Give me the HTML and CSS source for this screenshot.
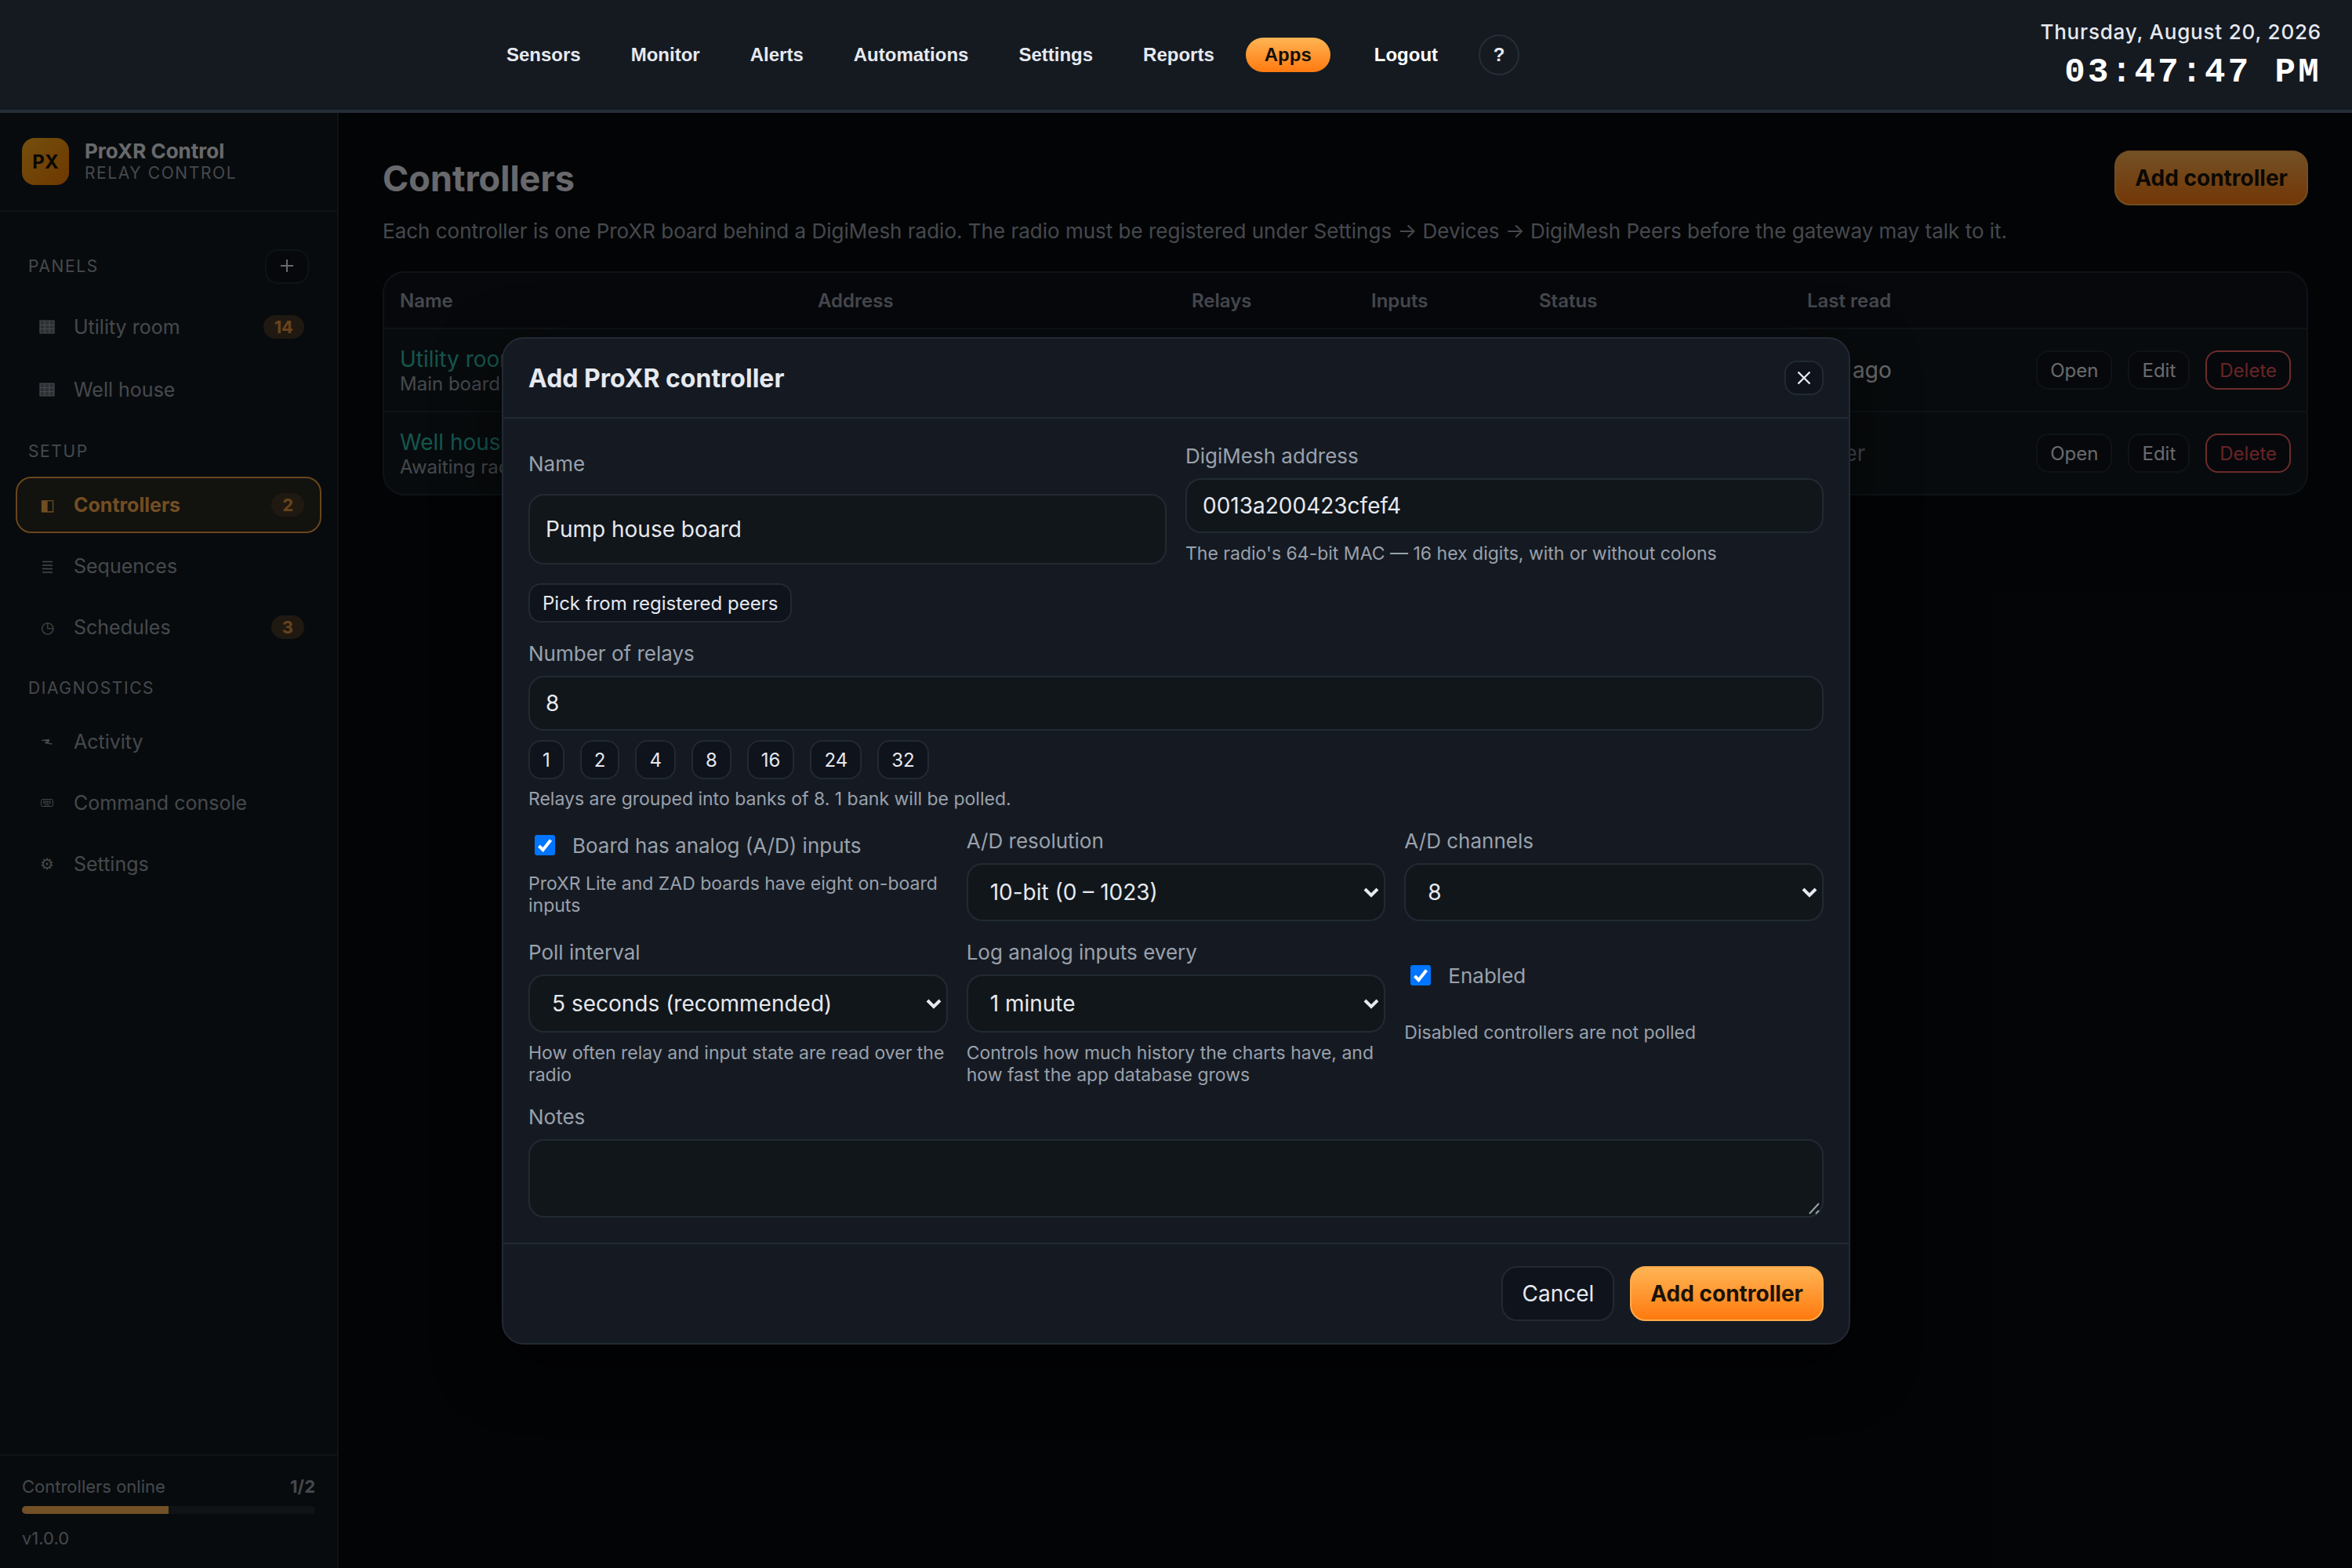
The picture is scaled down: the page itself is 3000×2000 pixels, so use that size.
FILE: index.html
```html
<!DOCTYPE html>
<html lang="en">
<head>
    <meta charset="UTF-8">
    <title>ProXR Control</title>
    <link rel="stylesheet" href="styles.css">
</head>
<body>
    <header class="topbar">
        <nav class="topnav">
            <a>Sensors</a>
            <a>Monitor</a>
            <a>Alerts</a>
            <a>Automations</a>
            <a>Settings</a>
            <a>Reports</a>
            <a class="current">Apps</a>
            <a class="logout">Logout</a>
            <span class="help">?</span>
        </nav>
        <div class="clock">
            <div class="clock-date">Thursday, August 20, 2026</div>
            <div class="clock-time">03:47:47 PM</div>
        </div>
    </header>

    <div class="app">
        <aside class="sidebar">
            <div class="brand">
                <div class="brand-mark">PX</div>
                <div>
                    <div class="brand-name">ProXR Control</div>
                    <div class="brand-sub">RELAY CONTROL</div>
                </div>
            </div>
            <div class="side-nav">
                <div class="side-title with-button">PANELS <button class="btn small add"><svg viewBox="0 0 16 16"><path d="M8 0v16M0 8h16"/></svg></button></div>
                <a class="side-item panel"><svg class="icon" viewBox="0 0 20 20"><path d="M1 2h18v16H1zM7 2v16M13 2v16M1 7.500h18M1 12.500h18" fill="currentColor" fill-opacity=".6" stroke="currentColor" stroke-width="1.200"/></svg>Utility room<span class="badge">14</span></a>
                <a class="side-item panel"><svg class="icon" viewBox="0 0 20 20"><path d="M1 2h18v16H1zM7 2v16M13 2v16M1 7.500h18M1 12.500h18" fill="currentColor" fill-opacity=".6" stroke="currentColor" stroke-width="1.200"/></svg>Well house</a>
                <div class="side-title">SETUP</div>
                <a class="side-item active"><span class="icon">◧</span>Controllers<span class="badge">2</span></a>
                <a class="side-item"><svg class="icon" viewBox="0 0 20 20"><path d="M4 4.500h13M4 9h13M4 13.500h13M4 18h13" fill="none" stroke="currentColor" stroke-width="1.700"/></svg>Sequences</a>
                <a class="side-item"><span class="icon">◷</span>Schedules<span class="badge">3</span></a>
                <div class="side-title">DIAGNOSTICS</div>
                <a class="side-item"><svg class="icon" viewBox="0 0 20 20"><path d="M3.500 8.500l8-1-4 4.500M16.500 13l-6.500-1 3-4" fill="none" stroke="currentColor" stroke-width="1.600"/></svg>Activity</a>
                <a class="side-item"><svg class="icon" viewBox="0 0 20 20"><rect x="2.500" y="5.500" width="15" height="9" rx="2" fill="none" stroke="currentColor"/><path d="M5 8h10M5 10h10M7 12.500h6" stroke="currentColor" stroke-width="1.300" stroke-dasharray="1.500 .8"/></svg>Command console</a>
                <a class="side-item"><span class="icon">⚙</span>Settings</a>
            </div>
            <div class="side-footer">
                <div class="online"><span>Controllers online</span><b>1/2</b></div>
                <div class="meter"><div class="meter-fill" style="width: 50%"></div></div>
                <div>v1.0.0</div>
            </div>
        </aside>

        <main class="main">
            <div class="page-head">
                <h1>Controllers</h1>
                <button class="btn primary">Add controller</button>
            </div>
            <p class="lead">Each controller is one ProXR board behind a DigiMesh radio. The radio must be registered under Settings → Devices → DigiMesh Peers before the gateway may talk to it.</p>
            <div class="table">
                <div class="tr th">
                    <span>Name</span><span>Address</span><span>Relays</span><span>Inputs</span><span>Status</span><span>Last read</span><span></span>
                </div>
                <div class="tr">
                    <div><a class="link">Utility room</a><div class="sub">Main board</div></div>
                    <span></span><span></span><span></span><span></span>
                    <span class="seen">34s ago</span>
                    <div class="actions">
                        <button class="btn small">Open</button>
                        <button class="btn small">Edit</button>
                        <button class="btn small danger">Delete</button>
                    </div>
                </div>
                <div class="tr">
                    <div><a class="link">Well house</a><div class="sub">Awaiting radio</div></div>
                    <span></span><span></span><span></span><span></span>
                    <span class="seen never">never</span>
                    <div class="actions">
                        <button class="btn small">Open</button>
                        <button class="btn small">Edit</button>
                        <button class="btn small danger">Delete</button>
                    </div>
                </div>
            </div>
        </main>

        <div class="overlay">
            <div class="modal">
                <div class="modal-head">
                    <h2>Add ProXR controller</h2>
                    <button class="btn small close"><svg viewBox="0 0 18 18"><path d="M1.500 1.500l15 15M16.500 1.500l-15 15"/></svg></button>
                </div>
                <div class="modal-body">
                    <div class="row two">
                        <div class="field stretch">
                            <label>Name</label>
                            <div class="input tall">Pump house board</div>
                        </div>
                        <div class="field">
                            <label>DigiMesh address</label>
                            <div class="input">0013a200423cfef4</div>
                            <div class="hint">The radio's 64-bit MAC — 16 hex digits, with or without colons</div>
                        </div>
                    </div>
                    <button class="btn small pick">Pick from registered peers</button>
                    <div class="field relays">
                        <label>Number of relays</label>
                        <div class="input">8</div>
                        <div class="chips">
                            <button class="btn small">1</button>
                            <button class="btn small">2</button>
                            <button class="btn small">4</button>
                            <button class="btn small">8</button>
                            <button class="btn small">16</button>
                            <button class="btn small">24</button>
                            <button class="btn small">32</button>
                        </div>
                        <div class="hint">Relays are grouped into banks of 8. 1 bank will be polled.</div>
                    </div>
                    <div class="row three">
                        <div class="field">
                            <div class="check">
                                <svg class="box" viewBox="0 0 26 26"><rect width="26" height="26" rx="3" fill="#0075ff"/><path d="M5.500 14l5 5L20.500 6.500" fill="none" stroke="#fff" stroke-width="4"/></svg>
                                <span>Board has analog (A/D) inputs</span>
                            </div>
                            <div class="hint">ProXR Lite and ZAD boards have eight on-board inputs</div>
                        </div>
                        <div class="field">
                            <label>A/D resolution</label>
                            <div class="input select">10-bit (0 – 1023)<svg class="arrow" viewBox="0 0 20 14"><path d="M2 3l8 8 8-8"/></svg></div>
                        </div>
                        <div class="field">
                            <label>A/D channels</label>
                            <div class="input select">8<svg class="arrow" viewBox="0 0 20 14"><path d="M2 3l8 8 8-8"/></svg></div>
                        </div>
                    </div>
                    <div class="row three">
                        <div class="field">
                            <label>Poll interval</label>
                            <div class="input select">5 seconds (recommended)<svg class="arrow" viewBox="0 0 20 14"><path d="M2 3l8 8 8-8"/></svg></div>
                            <div class="hint">How often relay and input state are read over the radio</div>
                        </div>
                        <div class="field">
                            <label>Log analog inputs every</label>
                            <div class="input select">1 minute<svg class="arrow" viewBox="0 0 20 14"><path d="M2 3l8 8 8-8"/></svg></div>
                            <div class="hint">Controls how much history the charts have, and how fast the app database grows</div>
                        </div>
                        <div class="field enabled">
                            <div class="check">
                                <svg class="box" viewBox="0 0 26 26"><rect width="26" height="26" rx="3" fill="#0075ff"/><path d="M5.500 14l5 5L20.500 6.500" fill="none" stroke="#fff" stroke-width="4"/></svg>
                                <span>Enabled</span>
                            </div>
                            <div class="hint">Disabled controllers are not polled</div>
                        </div>
                    </div>
                    <div class="field last">
                        <label>Notes</label>
                        <div class="input notes"><svg class="grip" viewBox="0 0 16 16"><path d="M2 15L14 2M10 15l4-4"/></svg></div>
                    </div>
                </div>
                <div class="modal-foot">
                    <button class="btn">Cancel</button>
                    <button class="btn primary">Add controller</button>
                </div>
            </div>
        </div>
    </div>
</body>
</html>
```

FILE: styles.css
```css
* {
    box-sizing: border-box;
}

body {
    margin: 0;
    height: 2000px;
    display: flex;
    flex-direction: column;
    overflow: hidden;
    background: #080b0e;
    color: #e6e9f0;
    font-family: Inter, "Liberation Sans", sans-serif;
    font-size: 28px;
}

h1, h2, p {
    margin: 0;
}

/* top bar */
.topbar {
    height: 144px;
    flex: none;
    display: flex;
    justify-content: space-between;
    align-items: flex-start;
    padding: 0 39px 0 622px;
    background: #151a21;
    border-bottom: 4px solid #252d37;
}

.topnav {
    display: flex;
    align-items: center;
    gap: 16px;
    height: 140px;
    font: bold 24px "Liberation Sans", Arial, sans-serif;
}

.topnav a {
    padding: 8px 24px;
    line-height: 28px;
}

.topnav .current {
    color: #14100a;
    border-radius: 22px;
    background: linear-gradient(#ffb454, #ff7a0f);
}

.topnav .logout {
    margin-left: 16px;
    color: #fff;
}

.help {
    width: 52px;
    height: 52px;
    margin-left: 12px;
    border: 2px solid #252d37;
    border-radius: 50%;
    line-height: 48px;
    text-align: center;
}

.clock {
    text-align: right;
    padding-top: 24px;
}

.clock-date {
    font-size: 26px;
    font-weight: 500;
    letter-spacing: 0.8px;
    line-height: 34px;
}

.clock-time {
    margin-top: 10px;
    color: #fff;
    font: bold 44px "Courier New", "Liberation Mono", monospace;
    line-height: 48px;
    letter-spacing: 3.4px;
}

.app {
    position: relative;
    flex: 1;
    display: flex;
    min-height: 0;
}

/* buttons */
.btn {
    height: 70px;
    padding: 0 24px;
    border: 2px solid #212a33;
    border-radius: 20px;
    background: #0f131b;
    color: #e6e9f0;
    font: 400 28px Inter, sans-serif;
    white-space: nowrap;
}

.btn.small {
    height: 50px;
    padding: 0 16px;
    border-radius: 16px;
    font-size: 24px;
}

.btn.primary {
    border-color: #ffab4a;
    background: linear-gradient(#ffb454, #ff7a0f);
    color: #1a1206;
    font-weight: 700;
}

.btn.danger {
    border-color: #ef5f5f;
    color: #e05252;
}

/* sidebar */
.sidebar {
    width: 432px;
    flex: none;
    display: flex;
    flex-direction: column;
    background: #12191e;
    border-right: 2px solid #212a33;
    color: #9aa1ac;
}

.brand {
    height: 126px;
    display: flex;
    align-items: center;
    gap: 20px;
    padding: 0 28px;
    border-bottom: 2px solid #212a33;
}

.brand-mark {
    width: 60px;
    height: 60px;
    border-radius: 16px;
    background: linear-gradient(135deg, #ffb020, #f57c00);
    color: #14100a;
    font-size: 24px;
    font-weight: 700;
    line-height: 62px;
    text-align: center;
}

.brand-name {
    color: #e6e9f0;
    font-weight: 700;
    font-size: 26px;
    line-height: 30px;
}

.brand-sub {
    font-size: 21px;
    line-height: 26px;
    letter-spacing: 1.6px;
}

.side-nav {
    flex: 1;
    display: flex;
    flex-direction: column;
    gap: 6px;
    padding: 39px 20px;
}

.side-title {
    height: 62px;
    padding: 10px 16px 0;
    font-size: 21px;
    line-height: 52px;
    letter-spacing: 1.6px;
}

.side-title.with-button {
    height: 65px;
    display: flex;
    align-items: center;
    justify-content: space-between;
    padding: 0 16px 3px;
}

.btn.add, .btn.close {
    width: 50px;
    height: 44px;
    display: flex;
    align-items: center;
    justify-content: center;
    padding: 0;
}

.btn.add {
    width: 56px;
}

.add svg, .close svg {
    width: 18px;
    height: 18px;
    fill: none;
    stroke: #e6e9f0;
    stroke-width: 2.4;
}

.add svg {
    width: 16px;
    height: 16px;
    margin-bottom: 3px;
    stroke-width: 2;
}

.side-item {
    height: 72px;
    display: flex;
    align-items: center;
    gap: 24px;
    padding: 0 20px 0 28px;
    border: 2px solid transparent;
    border-radius: 20px;
    font-size: 25px;
}

.side-item.panel {
    height: 74px;
}

.side-item.active {
    border-color: #e89a42;
    background: #39322499;
    color: #ffae4d;
    font-weight: 700;
}

.icon {
    width: 20px;
    height: 20px;
    font-size: 20px;
    font-weight: 400;
    line-height: 20px;
    text-align: center;
}

.badge {
    margin-left: auto;
    padding: 0 14px;
    border-radius: 15px;
    background: #453828;
    color: #e8963a;
    font-size: 22px;
    font-weight: 700;
    line-height: 30px;
}

.side-footer {
    height: 145px;
    padding: 24px 28px 0;
    border-top: 2px solid #212a33;
    font-size: 22px;
    line-height: 30px;
}

.online {
    display: flex;
    justify-content: space-between;
}

.meter {
    height: 10px;
    margin: 10px 0 16px;
    border-radius: 5px;
    overflow: hidden;
    background: #232a32;
}

.meter-fill {
    height: 100%;
    background: #ffb454;
}

/* controllers list */
.main {
    flex: 1;
    padding: 48px 56px;
}

.page-head {
    display: flex;
    align-items: center;
    justify-content: space-between;
}

h1 {
    font-size: 45px;
    font-weight: 700;
}

.lead {
    margin-top: 16px;
    color: #9aa1ac;
    font-size: 26px;
    line-height: 34px;
}

.table {
    margin-top: 34px;
    border: 2px solid #212a33;
    border-radius: 28px;
    background: #12191e;
    overflow: hidden;
}

.tr {
    height: 106px;
    display: grid;
    grid-template-columns: 533px 477px 229px 214px 342px 1fr auto;
    align-items: center;
    padding: 0 20px;
}

.tr + .tr {
    border-top: 2px solid #212a33;
}

.tr.th {
    height: 70px;
    background: #10131b;
    color: #9aa1ac;
    font-size: 24px;
    font-weight: 600;
}

.link {
    color: #2dbfae;
}

.sub {
    color: #9aa1ac;
    font-size: 24px;
}

.never {
    color: #9aa1ac;
}

.actions {
    display: flex;
    gap: 20px;
}

/* modal */
.overlay {
    position: absolute;
    inset: 0;
    display: flex;
    justify-content: center;
    align-items: flex-start;
    padding-top: 286px;
    background: rgba(0, 0, 0, 0.55);
}

.modal {
    width: 1720px;
    border: 2px solid #212a33;
    border-radius: 28px;
    background: #151a22;
    box-shadow: 0 24px 80px rgba(0, 0, 0, 0.6);
}

.modal-head {
    height: 102px;
    display: flex;
    align-items: center;
    justify-content: space-between;
    padding: 0 32px;
    border-bottom: 2px solid #212a33;
}

h2 {
    font-size: 32px;
    font-weight: 700;
}

.modal-body {
    padding: 30px 32px 32px;
}

.row {
    display: grid;
    column-gap: 24px;
}

.row.two {
    grid-template-columns: 1fr 1fr;
}

.row.three {
    grid-template-columns: 1fr 1fr 1fr;
    margin-top: 22px;
}

label {
    display: block;
    height: 46px;
    color: #9aa1ac;
    font-size: 26px;
    line-height: 36px;
}

.stretch label {
    height: 66px;
    line-height: 56px;
}

.input {
    height: 70px;
    display: flex;
    align-items: center;
    padding: 0 20px;
    border: 2px solid #212a33;
    border-radius: 20px;
    background: #11161a;
    font-size: 28px;
}

.input.tall {
    height: 90px;
}

.input.select {
    height: 74px;
    justify-content: space-between;
    padding: 0 6px 0 28px;
}

.arrow {
    width: 20px;
    height: 14px;
    fill: none;
    stroke: #e6e9f0;
    stroke-width: 4;
}

.hint {
    margin-top: 12px;
    color: #9aa1ac;
    font-size: 23px;
    line-height: 28px;
}

.pick {
    display: block;
    margin-top: 24px;
}

.relays, .last {
    margin-top: 22px;
}

.relays .hint {
    margin-top: 11px;
}

.chips {
    display: flex;
    gap: 20px;
    margin-top: 12px;
}

.check {
    height: 48px;
    display: flex;
    align-items: center;
    gap: 22px;
    padding: 0 0 2px 8px;
    color: #9aa1ac;
    font-size: 26px;
}

.box {
    width: 26px;
    height: 26px;
}

.check + .hint {
    margin-top: 10px;
}

.enabled .check {
    height: 96px;
}

.notes {
    height: 100px;
    align-items: flex-end;
    justify-content: flex-end;
    padding: 2px;
}

.grip {
    width: 16px;
    height: 16px;
    fill: none;
    stroke: #9aa1ac;
    stroke-width: 2;
}

.modal-foot {
    height: 128px;
    display: flex;
    align-items: center;
    justify-content: flex-end;
    gap: 20px;
    padding: 0 32px;
    border-top: 2px solid #212a33;
}
```
